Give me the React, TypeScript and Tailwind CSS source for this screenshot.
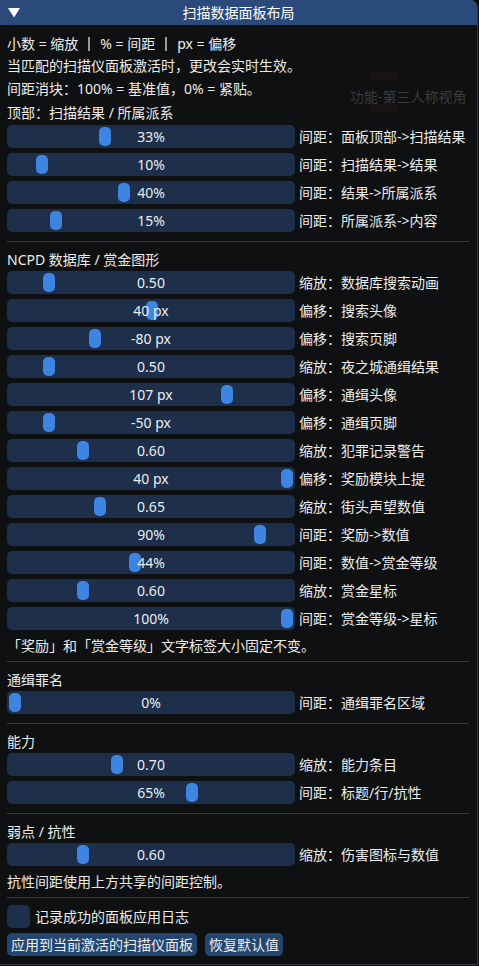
import React from 'react';

type S = { v: string; f: number; label: string };

const topRows: S[] = [
  { v: '33%', f: 0.33, label: '间距：面板顶部->扫描结果' },
  { v: '10%', f: 0.1, label: '间距：扫描结果->结果' },
  { v: '40%', f: 0.4, label: '间距：结果->所属派系' },
  { v: '15%', f: 0.15, label: '间距：所属派系->内容' },
];

const ncpdRows: S[] = [
  { v: '0.50', f: 0.125, label: '缩放：数据库搜索动画' },
  { v: '40 px', f: 0.503, label: '偏移：搜索头像' },
  { v: '-80 px', f: 0.294, label: '偏移：搜索页脚' },
  { v: '0.50', f: 0.125, label: '缩放：夜之城通缉结果' },
  { v: '107 px', f: 0.779, label: '偏移：通缉头像' },
  { v: '-50 px', f: 0.125, label: '偏移：通缉页脚' },
  { v: '0.60', f: 0.25, label: '缩放：犯罪记录警告' },
  { v: '40 px', f: 1, label: '偏移：奖励模块上提' },
  { v: '0.65', f: 0.3125, label: '缩放：街头声望数值' },
  { v: '90%', f: 0.9, label: '间距：奖励->数值' },
  { v: '44%', f: 0.44, label: '间距：数值->赏金等级' },
  { v: '0.60', f: 0.25, label: '缩放：赏金星标' },
  { v: '100%', f: 1, label: '间距：赏金等级->星标' },
];

const wantedRows: S[] = [{ v: '0%', f: 0, label: '间距：通缉罪名区域' }];

const abilityRows: S[] = [
  { v: '0.70', f: 0.375, label: '缩放：能力条目' },
  { v: '65%', f: 0.65, label: '间距：标题/行/抗性' },
];

const weakRows: S[] = [{ v: '0.60', f: 0.25, label: '缩放：伤害图标与数值' }];

function Slider({ v, f, label }: S) {
  return (
    <div className="flex items-center h-[23px]">
      <div className="relative w-[288px] h-[23px] shrink-0 rounded-[5px] bg-[#1d2f4a] flex items-center justify-center">
        <div
          className="absolute top-[2px] w-[12px] h-[19px] rounded-[5px] bg-[#3d85e0]"
          style={{ left: 2 + f * 272 }}
        />
        <span className="relative text-[14px] leading-[17px] whitespace-nowrap">{v}</span>
      </div>
      <span className="ml-[4px] text-[14px] leading-[17px] whitespace-nowrap">{label}</span>
    </div>
  );
}

function Group({ rows, className }: { rows: S[]; className: string }) {
  return (
    <div className={'flex flex-col gap-[5px] ' + className}>
      {rows.map((r, i) => (
        <Slider key={i} {...r} />
      ))}
    </div>
  );
}

function Line({ children, className }: { children: React.ReactNode; className?: string }) {
  return (
    <div className={'h-[17px] text-[14px] leading-[17px] whitespace-nowrap ' + (className || '')}>
      {children}
    </div>
  );
}

function Sep({ className }: { className: string }) {
  return <div className={'h-px w-[462px] bg-[#3a3b42] ' + className} />;
}

function Bar() {
  return <span className="inline-block mx-[10px] w-[2px] h-[14px] bg-[#9a9a9a] align-[-2px]" />;
}

export default function App() {
  return (
    <div className="min-h-screen w-full bg-[#0b0d11] font-['Noto_Sans','Noto_Sans_CJK_SC',sans-serif] text-[#ececec]">
      <div className="relative w-[478px] bg-[#0f1011] border-r border-b border-[#3a3b42] rounded-tr-[7px] overflow-hidden">
        {/* faint backdrop showing through the translucent window */}
        <div className="absolute left-[370px] top-[73px] w-[27px] h-[8px] bg-[#1a1313] pointer-events-none" />
        <div className="absolute left-[370px] top-[105px] w-[27px] h-[8px] bg-[#1a1313] pointer-events-none" />
        <div className="absolute left-[350px] top-[88px] text-[14px] leading-[17px] text-[#3a3b3e] whitespace-nowrap pointer-events-none">
          功能-第三人称视角
        </div>

        <div className="relative h-[25px] bg-[#294a7a] flex items-center justify-center">
          <svg className="absolute left-[8px] top-[8px]" width="12" height="10" viewBox="0 0 12 10">
            <polygon points="0,0 12,0 6,9.5" fill="#ffffff" />
          </svg>
          <span className="text-[14px] leading-[17px] text-white">扫描数据面板布局</span>
        </div>

        <div className="relative flex flex-col pl-[7px] pt-[10px] pb-[8px]">
          <Line>
            小数 = 缩放<Bar />% = 间距<Bar />px = 偏移
          </Line>
          <Line className="mt-[5px]">当匹配的扫描仪面板激活时，更改会实时生效。</Line>
          <Line className="mt-[6px]">间距消块：100% = 基准值，0% = 紧贴。</Line>
          <Line className="mt-[7px]">顶部：扫描结果 / 所属派系</Line>
          <Group rows={topRows} className="mt-[4px]" />

          <Sep className="mt-[9px]" />
          <Line className="mt-[9px]">NCPD 数据库 / 赏金图形</Line>
          <Group rows={ncpdRows} className="mt-[3px]" />
          <Line className="mt-[7px]">「奖励」和「赏金等级」文字标签大小固定不变。</Line>

          <Sep className="mt-[7px]" />
          <Line className="mt-[9px]">通缉罪名</Line>
          <Group rows={wantedRows} className="mt-[3px]" />

          <Sep className="mt-[9px]" />
          <Line className="mt-[9px]">能力</Line>
          <Group rows={abilityRows} className="mt-[3px]" />

          <Sep className="mt-[9px]" />
          <Line className="mt-[9px]">弱点 / 抗性</Line>
          <Group rows={weakRows} className="mt-[3px]" />
          <Line className="mt-[7px]">抗性间距使用上方共享的间距控制。</Line>

          <Sep className="mt-[7px]" />
          <div className="mt-[7px] flex items-center h-[23px]">
            <div className="w-[23px] h-[23px] rounded-[5px] bg-[#1d2f4a]" />
            <span className="ml-[5px] text-[14px] leading-[17px]">记录成功的面板应用日志</span>
          </div>
          <div className="mt-[5px] flex gap-[8px]">
            <button className="h-[23px] px-[4px] rounded-[5px] bg-[#23466f] text-[14px] leading-[17px] text-[#ececec]">
              应用到当前激活的扫描仪面板
            </button>
            <button className="h-[23px] px-[4px] rounded-[5px] bg-[#23466f] text-[14px] leading-[17px] text-[#ececec]">
              恢复默认值
            </button>
          </div>
        </div>
      </div>
    </div>
  );
}
